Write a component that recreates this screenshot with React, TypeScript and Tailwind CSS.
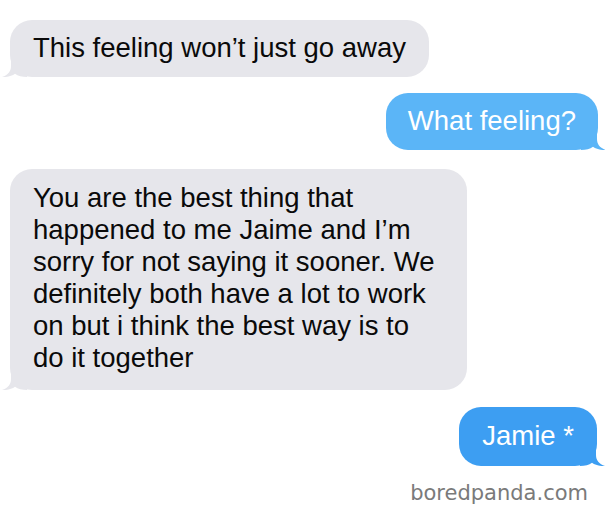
import React from "react";

type Side = "left" | "right";

const font = { fontFamily: '"Liberation Sans", Arial, sans-serif' };

function Tail({ side, color }: { side: Side; color: string }) {
  // iMessage style tail, mirrored for the right side
  return (
    <svg
      viewBox="0 0 26 24"
      className={
        side === "left"
          ? "absolute bottom-0 -left-[9px] w-[26px] h-[24px]"
          : "absolute bottom-0 -right-[9px] w-[26px] h-[24px] -scale-x-100"
      }
    >
      <path
        d="M10 0 L10 13 C10 18.5 7 22 1 24 C6.5 24.4 11 23 14 20.8 C17 23 21 24 26 24 L26 0 Z"
        fill={color}
      />
    </svg>
  );
}

function Bubble({
  side,
  color,
  className,
  children,
}: {
  side: Side;
  color: string;
  className: string;
  children: React.ReactNode;
}) {
  return (
    <div
      className={`relative rounded-[22px] text-[27.5px] leading-[32px] ${className}`}
      style={{ ...font, backgroundColor: color }}
    >
      <Tail side={side} color={color} />
      <div className="relative">{children}</div>
    </div>
  );
}

export default function App() {
  return (
    <div className="w-[605px] h-[520px] bg-white overflow-hidden flex flex-col pt-[20px]">
      <Bubble
        side="left"
        color="#e6e6eb"
        className="self-start ml-[10px] px-[23px] pt-[12px] pb-[13px] text-[#0a0a0a]"
      >
        This feeling won’t just go away
      </Bubble>

      <Bubble
        side="right"
        color="#5bb5f7"
        className="self-end mr-[7px] mt-[16px] px-[22px] pt-[12px] pb-[13px] text-white"
      >
        What feeling?
      </Bubble>

      <Bubble
        side="left"
        color="#e6e6eb"
        className="self-start ml-[10px] mt-[19px] w-[457px] pl-[23px] pt-[13px] pb-[16px] text-[#0a0a0a]"
      >
        You are the best thing that
        <br />
        happened to me Jaime and I’m
        <br />
        sorry for not saying it sooner. We
        <br />
        definitely both have a lot to work
        <br />
        on but i think the best way is to
        <br />
        do it together
      </Bubble>

      <Bubble
        side="right"
        color="#3d9ef2"
        className="self-end mr-[8px] mt-[17px] px-[23px] pt-[13px] pb-[14px] text-white"
      >
        Jamie *
      </Bubble>

      <div
        className="self-end mr-[17px] mt-[14px] text-[21px] leading-[26px] text-[#7a7a7a]"
        style={{ fontFamily: '"DejaVu Sans", Verdana, sans-serif' }}
      >
        boredpanda.com
      </div>
    </div>
  );
}
